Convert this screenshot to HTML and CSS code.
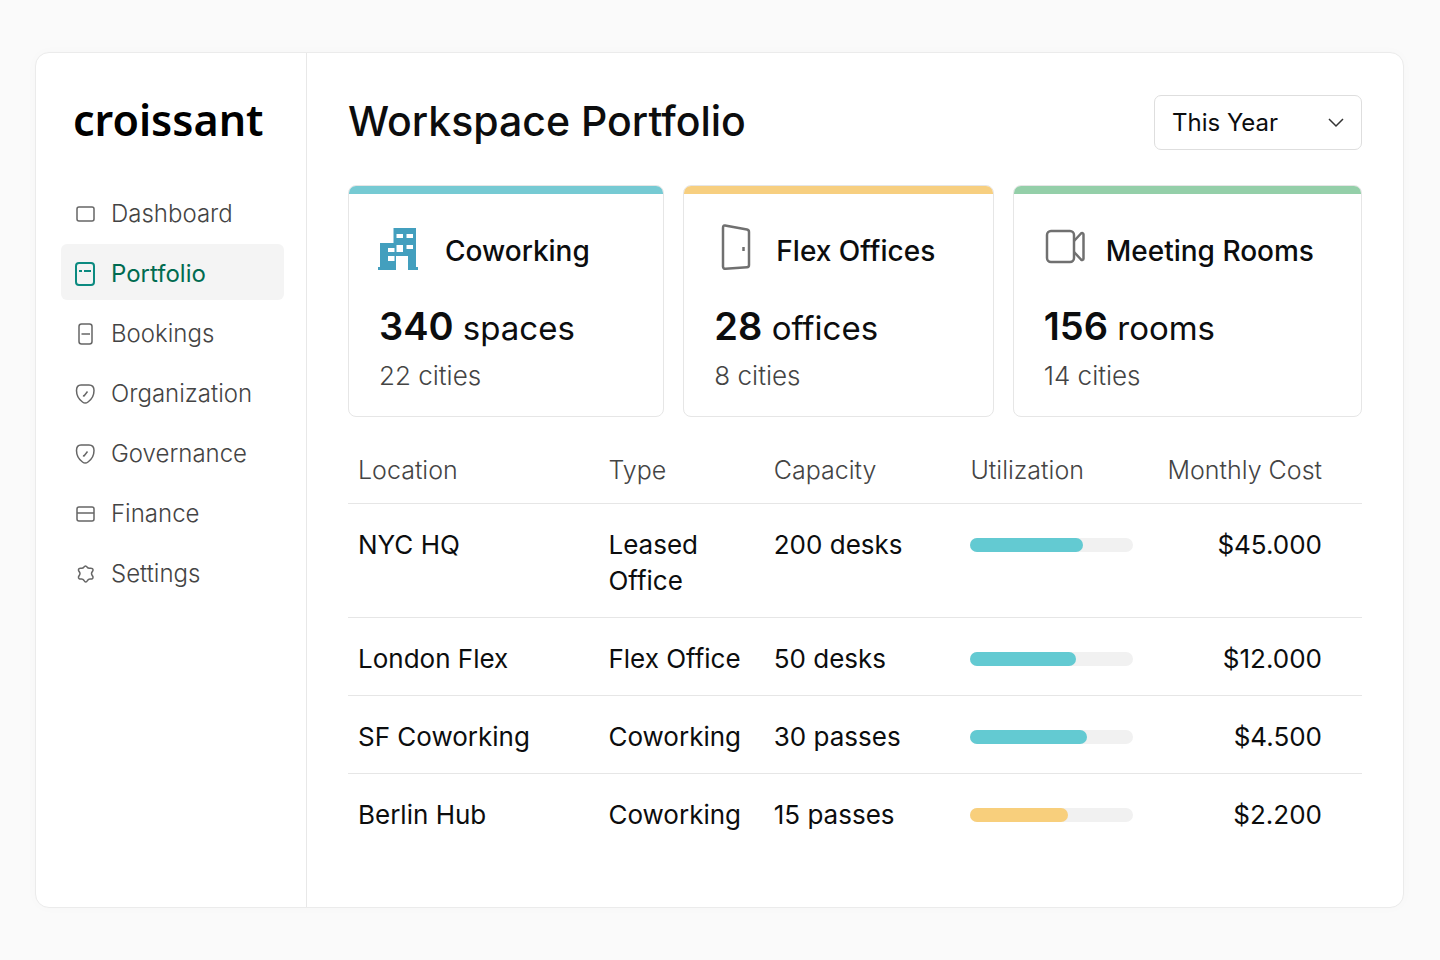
FILE: index.html
```html
<!DOCTYPE html>
<html lang="en">
<head>
    <meta charset="UTF-8">
    <meta name="viewport" content="width=device-width, initial-scale=1.0">
    <title>Workspace Portfolio</title>
    <link rel="stylesheet" href="styles.css">
</head>
<body>
    <div class="app">
        <aside class="sidebar">
            <a class="logo" href="#">croissant</a>
            <nav class="nav">
                <a class="nav-item" href="#">
                    <svg class="nav-icon" viewBox="0 0 20 24"><rect x="1" y="5" width="17" height="14" rx="2"/></svg>
                    Dashboard
                </a>
                <a class="nav-item active" href="#">
                    <svg class="nav-icon" viewBox="0 0 20 24"><rect x="0" y="1" width="18" height="22" rx="3"/><path d="M3 9h3M8 9h7"/></svg>
                    Portfolio
                </a>
                <a class="nav-item" href="#">
                    <svg class="nav-icon" viewBox="0 0 20 24"><rect x="3" y="2" width="13" height="20" rx="2.500"/><path d="M5.500 12h8.500"/></svg>
                    Bookings
                </a>
                <a class="nav-item" href="#">
                    <svg class="nav-icon" viewBox="0 0 20 24"><path d="M5 3h8c3.500 0 5 2 5 5.500 0 5-2.500 9-6 11.500-2 1.500-3.500 1.500-5.500 0C3 17.500.5 13.500.5 8.500.5 5 2 3 5 3z"/><path d="M7 13.500l1 .5 3.500-4.500"/></svg>
                    Organization
                </a>
                <a class="nav-item" href="#">
                    <svg class="nav-icon" viewBox="0 0 20 24"><path d="M5 3h8c3.500 0 5 2 5 5.500 0 5-2.500 9-6 11.500-2 1.500-3.500 1.500-5.500 0C3 17.500.5 13.500.5 8.500.5 5 2 3 5 3z"/><path d="M7 13.500l1 .5 3.500-4.500"/></svg>
                    Governance
                </a>
                <a class="nav-item" href="#">
                    <svg class="nav-icon" viewBox="0 0 20 24"><rect x="1" y="5" width="17" height="14" rx="2"/><path d="M1 11h17"/></svg>
                    Finance
                </a>
                <a class="nav-item" href="#">
                    <svg class="nav-icon" viewBox="0 0 20 24"><path d="M8 5c.8-1.500 2.200-1.500 3 0 .8 1.200 1.500 1.500 3 1.300 2-.3 3.300.5 3 2-.2 1-1.500 1.700-1.500 3.200s1.300 2.500 1.500 3.500c.3 1.500-1 2.300-2.500 2-1.500-.2-2.300.3-3 1.500-1 2-2.500 2-3.500 0-.7-1.200-1.500-1.700-3-1.500-1.500.3-2.800-.5-2.500-2 .2-1 1.500-2 1.500-3.500s-1.300-2.200-1.500-3.200c-.3-1.500 1-2.300 2.500-2 1.500.2 2.200-.1 3-1.300z"/></svg>
                    Settings
                </a>
            </nav>
        </aside>

        <main class="main">
            <header class="page-header">
                <h1>Workspace Portfolio</h1>
                <div class="period">
                    <select id="period" aria-label="Period">
                        <option>This Year</option>
                        <option>Last Year</option>
                    </select>
                    <svg class="chevron" viewBox="0 0 16 10"><path d="M1 1l7 7 7-7"/></svg>
                </div>
            </header>

            <section class="cards">
                <article class="card card-coworking">
                    <div class="card-title">
                        <svg width="44" height="52" viewBox="0 0 44 52">
                            <path fill="#439fbe" fill-rule="evenodd" d="M14.500 4H37v39h2v3H29V32H17v14H-1v-3h2V19h13.500zM17.500 10v4h6.500v-4zM27.500 10v4H34v-4zM17.500 21v7H24v-7zM27.500 21v4H34v-4zM9 24v4h6.500v-4zM9 32v5h6.500v-5z"/>
                        </svg>
                        <h2>Coworking</h2>
                    </div>
                    <p class="card-count"><strong>340</strong> spaces</p>
                    <p class="card-cities">22 cities</p>
                </article>
                <article class="card card-flex">
                    <div class="card-title">
                        <svg class="line-icon" width="40" height="52" viewBox="0 0 40 52">
                            <path d="M11 1.500l22 4c1.500.3 2 1 2 2.500v33c0 1.500-.5 2.200-2 2.300l-21.500 1.500c-1.500.1-2.500-.8-2.500-2.300V4c0-2 .5-2.800 2-2.500z"/><path d="M29.500 23v4"/>
                        </svg>
                        <h2>Flex Offices</h2>
                    </div>
                    <p class="card-count"><strong>28</strong> offices</p>
                    <p class="card-cities">8 cities</p>
                </article>
                <article class="card card-rooms">
                    <div class="card-title">
                        <svg class="line-icon" width="40" height="52" viewBox="0 0 40 52">
                            <rect x="3" y="7" width="27" height="31" rx="4"/><path d="M30 17l7-7.500c1-1 2.500-.5 2.500 1v24c0 1.500-1.500 2-2.500 1L30 28"/>
                        </svg>
                        <h2>Meeting Rooms</h2>
                    </div>
                    <p class="card-count"><strong>156</strong> rooms</p>
                    <p class="card-cities">14 cities</p>
                </article>
            </section>

            <table class="locations">
                <thead>
                    <tr>
                        <th class="col-location">Location</th>
                        <th class="col-type">Type</th>
                        <th class="col-capacity">Capacity</th>
                        <th class="col-utilization">Utilization</th>
                        <th class="col-cost">Monthly Cost</th>
                    </tr>
                </thead>
                <tbody>
                    <tr>
                        <td>NYC HQ</td>
                        <td>Leased Office</td>
                        <td>200 desks</td>
                        <td><div class="bar"><div class="bar-fill" style="width: 69%"></div></div></td>
                        <td class="col-cost">$45.000</td>
                    </tr>
                    <tr>
                        <td>London Flex</td>
                        <td>Flex Office</td>
                        <td>50 desks</td>
                        <td><div class="bar"><div class="bar-fill" style="width: 65%"></div></div></td>
                        <td class="col-cost">$12.000</td>
                    </tr>
                    <tr>
                        <td>SF Coworking</td>
                        <td>Coworking</td>
                        <td>30 passes</td>
                        <td><div class="bar"><div class="bar-fill" style="width: 72%"></div></div></td>
                        <td class="col-cost">$4.500</td>
                    </tr>
                    <tr>
                        <td>Berlin Hub</td>
                        <td>Coworking</td>
                        <td>15 passes</td>
                        <td><div class="bar"><div class="bar-fill low" style="width: 60%"></div></div></td>
                        <td class="col-cost">$2.200</td>
                    </tr>
                </tbody>
            </table>
        </main>
    </div>
</body>
</html>
```
FILE: styles.css
```css
* {
    box-sizing: border-box;
}

body {
    margin: 0;
    padding: 52px 36px 52px 35px;
    min-height: 100vh;
    display: flex;
    background: #fafafa;
    color: #0c0d0e;
    font-family: Inter, sans-serif;
    font-size: 26px;
    line-height: 36px;
}

h1, h2, p {
    margin: 0;
}

.app {
    flex: 1;
    display: flex;
    background: #ffffff;
    border: 1px solid #ebebeb;
    border-radius: 14px;
    box-shadow: 0 0 12px rgba(0, 0, 0, 0.02);
}

/* Sidebar */
.sidebar {
    flex: 0 0 271px;
    padding: 38px 22px 0 25px;
    border-right: 1px solid #e8e8e8;
}

.logo {
    display: block;
    padding-left: 12px;
    color: #000000;
    font-family: "Noto Sans", sans-serif;
    font-size: 43px;
    font-weight: 600;
    line-height: 58px;
    text-decoration: none;
}

.nav {
    display: flex;
    flex-direction: column;
    gap: 4px;
    margin-top: 35px;
}

.nav-item {
    display: flex;
    align-items: center;
    gap: 15px;
    height: 56px;
    padding: 4px 15px 0;
    border-radius: 6px;
    color: #444444;
    font-size: 24px;
    font-weight: 300;
    text-decoration: none;
}

.nav-item.active {
    background: #f4f4f4;
    color: #006b50;
    font-weight: 400;
}

.nav-icon {
    flex: none;
    width: 20px;
    height: 24px;
    overflow: visible;
    fill: none;
    stroke: #666666;
    stroke-width: 1.5;
    stroke-linejoin: round;
}

.active .nav-icon {
    stroke: #0b8a80;
    stroke-width: 2;
}

/* Main area */
.main {
    flex: 1;
    padding: 42px 41px;
}

.page-header {
    display: flex;
    justify-content: space-between;
    align-items: center;
}

h1 {
    padding-bottom: 3px;
    font-size: 41px;
    font-weight: 550;
    line-height: 52px;
}

.period {
    position: relative;
}

.period select {
    display: block;
    width: 208px;
    height: 55px;
    padding: 0 17px;
    appearance: none;
    background: #ffffff;
    border: 1px solid #dedede;
    border-radius: 7px;
    color: #0c0d0e;
    font-family: inherit;
    font-size: 24px;
}

.chevron {
    position: absolute;
    top: 23px;
    right: 18px;
    width: 16px;
    height: 10px;
    fill: none;
    stroke: #333333;
    stroke-width: 1.5;
    pointer-events: none;
}

/* Summary cards */
.cards {
    display: grid;
    grid-template-columns: 317fr 311fr 350fr;
    gap: 19px;
    margin-top: 35px;
}

.card {
    position: relative;
    padding: 38px 30px 22px;
    border: 1px solid #e6e6e6;
    border-radius: 8px;
    overflow: hidden;
}

/* colored strip over the top border */
.card::before {
    content: "";
    position: absolute;
    top: -1px;
    left: -1px;
    right: -1px;
    height: 9px;
}

.card-coworking::before { background: #76cad3; }
.card-flex::before { background: #f7cf80; }
.card-rooms::before { background: #94cfa9; }

.card-title {
    display: flex;
    align-items: center;
    gap: 22px;
}

.card-title svg {
    flex: none;
    overflow: visible;
}

.line-icon {
    fill: none;
    stroke: #707070;
    stroke-width: 2.5;
    stroke-linejoin: round;
}

h2 {
    padding-top: 2px;
    font-size: 28px;
    font-weight: 500;
    line-height: 36px;
    white-space: nowrap;
}

.card-count {
    margin-top: 26px;
    font-size: 33px;
    line-height: 48px;
}

.card-count strong {
    font-size: 38px;
    font-weight: 600;
}

.card-cities {
    margin-top: 6px;
    color: #444444;
    font-size: 26px;
    font-weight: 300;
}

/* Locations table */
.locations {
    width: 100%;
    margin-top: 35px;
    border-collapse: collapse;
    table-layout: fixed;
}

th {
    padding: 0 10px 15px;
    color: #444444;
    font-size: 25px;
    font-weight: 300;
    text-align: left;
    white-space: nowrap;
}

td {
    padding: 23px 10px 18px;
    vertical-align: top;
}

th, td {
    border-bottom: 1px solid #e6e6e6;
}

tbody tr:last-child td {
    border-bottom: none;
}

.col-location { width: 24.7%; }
.col-type { width: 16.3%; }
.col-capacity { width: 19.4%; }
.col-utilization { width: 18%; }

.col-cost {
    padding-right: 40px;
    text-align: right;
}

.bar {
    height: 14px;
    margin-top: 11px;
    background: #f1f1f1;
    border-radius: 7px;
}

.bar-fill {
    height: 14px;
    background: #63cad2;
    border-radius: 7px;
}

.bar-fill.low {
    background: #f8cf7c;
}
```
